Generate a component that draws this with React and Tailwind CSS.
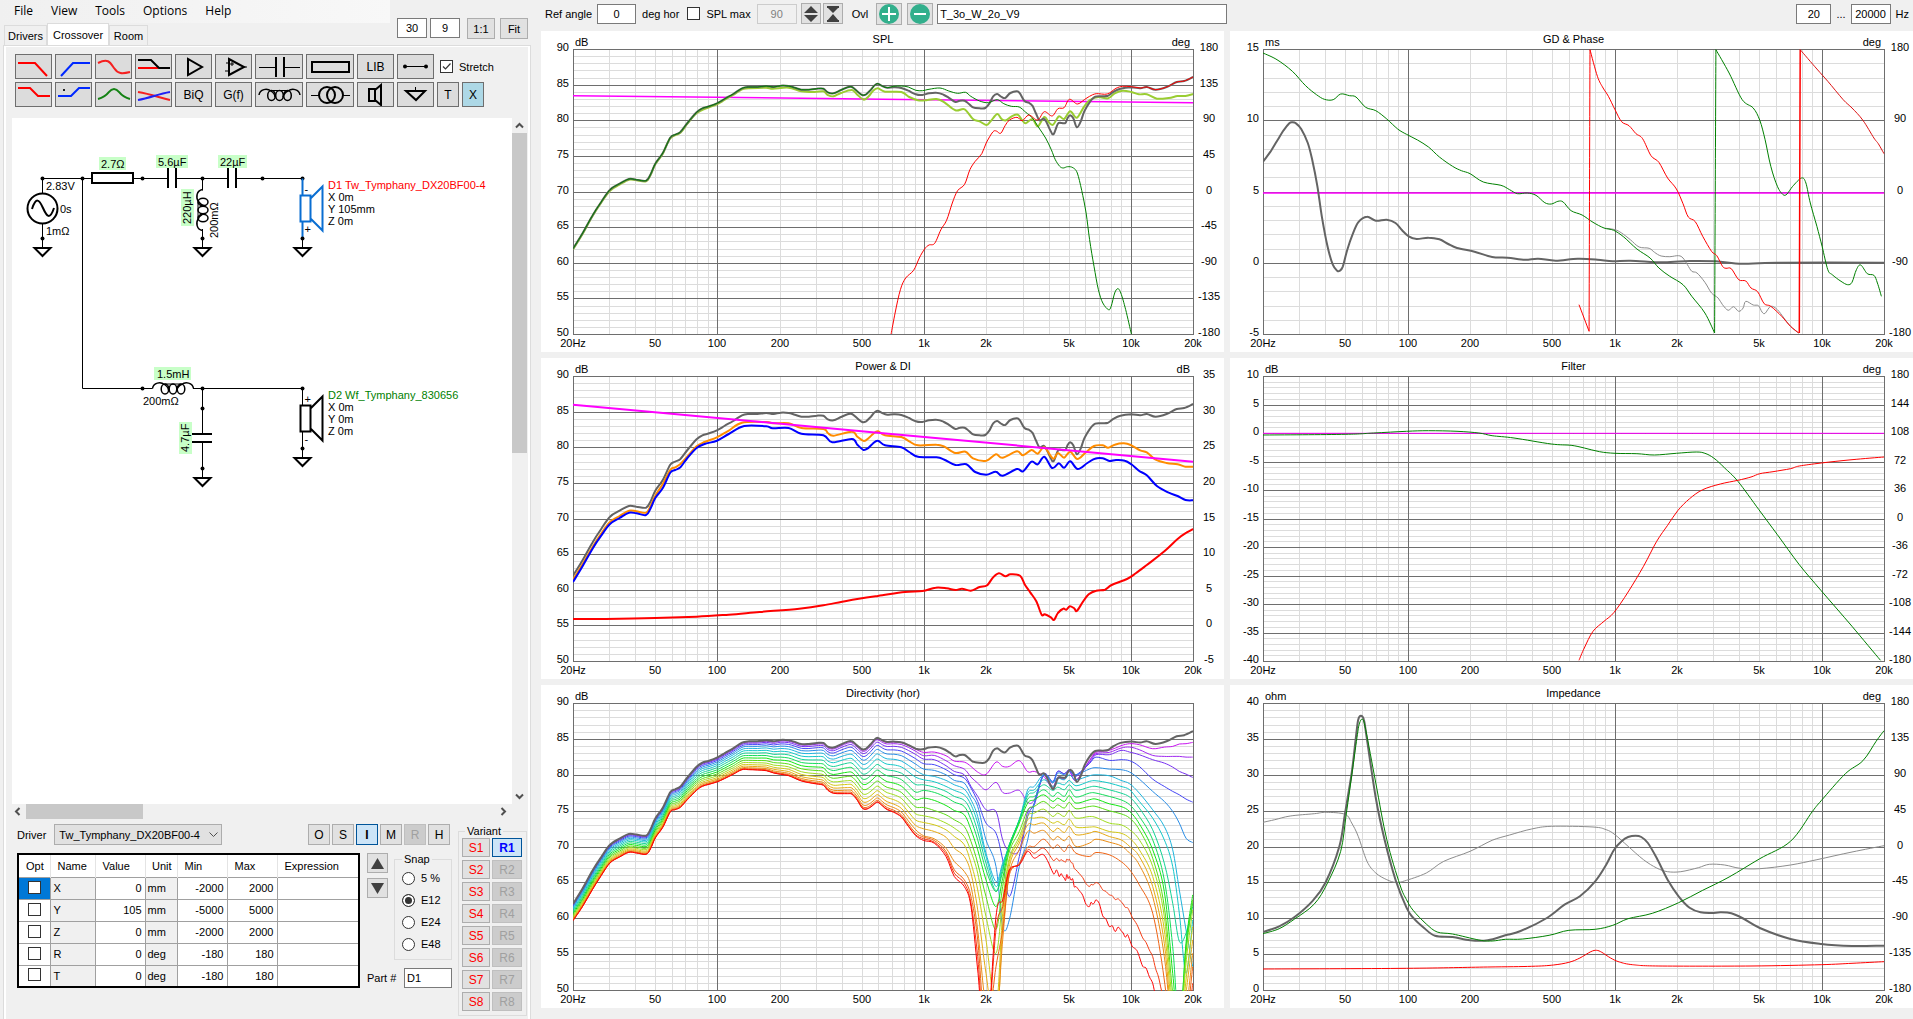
import React, { useState } from "react";
import clsx from "clsx";

const FREQ_LABELS = [
  [20, "20Hz"],
  [50, "50"],
  [100, "100"],
  [200, "200"],
  [500, "500"],
  [1000, "1k"],
  [2000, "2k"],
  [5000, "5k"],
  [10000, "10k"],
  [20000, "20k"],
];

const FREQ_LINES = [20, 100, 1000, 10000].flatMap((f) =>
  f === 20 ? [30, 40, 50, 60, 70, 80, 90] : [1, 2, 3, 4, 5, 6, 7, 8, 9].map((n) => n * f)
).filter((f) => f < 20000);

// each measurement set has its own raw coordinate box: [x, y, width, height]
const SPL_BOX = [76, 148, 1409, 855];
const POWER_BOX = [76, 64, 1409, 855];
const DIR_LOW_BOX = [76, 70, 1409, 861];
const DIR_HIGH_BOX = [-1039, -110, 1860, 860];
const GD_BOX = [88, 148, 1415, 855];
const FILTER_BOX = [88, 64, 1415, 855];
const IMP_BOX = [88, 70, 1415, 861];

const parse = (s) => s.trim().split(/\s+/).map((p) => p.split(",").map(Number));

const norm = (points, [bx, by, bw, bh]) => points.map(([x, y]) => [(x - bx) / bw, (y - by) / bh]);

const SUM_LOW = "76,747 98,700 120,648 140,607 160,570 182,552 203,538 220,540 242,543 252,525 263,492 280,460 297,414 308,405 320,397 336,370 357,338 370,326 385,320 403,311 420,298 440,283 460,266 475,262 495,262 515,259 532,262 548,258 566,259 580,264 595,270 612,270 630,267 645,267 655,278 668,281 685,271 700,263 710,262 722,275 733,286 742,284 753,270 762,256 769,252 780,260 790,264";
const SUM_MID = "805,263 822,265 838,273 855,284";
const SUM_HIGH = "870,286 885,281 902,279 918,285 932,296 945,307 955,303 966,303 976,313 985,323 1000,326 1013,325 1022,312 1031,290 1040,283 1049,291 1058,295 1070,280 1085,275 1092,282 1102,304 1112,309 1120,318 1128,341 1136,362 1146,357 1153,370 1160,390 1168,404 1178,372 1186,370 1195,370 1200,355 1206,347 1213,356 1221,383 1230,365 1238,335 1250,308 1263,291 1280,290 1292,288 1305,276 1320,267 1345,263 1365,266 1380,262 1400,270 1425,262 1448,247 1465,244 1485,232";
const SUM = norm(parse(`${SUM_LOW} ${SUM_MID} ${SUM_HIGH}`), SPL_BOX);

const splTraces = [
  { color: "#ff00ff", width: 1.5, points: norm(parse("76,288 1485,309"), SPL_BOX) },
  {
    color: "#9acd32",
    width: 2,
    points: norm(parse("76,749 98,702 120,650 140,609 160,573 182,555 203,540 220,542 242,545 252,527 263,494 280,462 297,416 320,399 336,372 357,341 385,323 403,314 420,301 440,286 460,269 475,266 515,264 530,267 566,264 595,275 625,277 645,275 655,286 668,290 685,280 710,271 722,285 737,300 748,290 758,273 769,266 785,276 822,277 840,292 860,302 875,302 902,298 920,308 945,332 966,329 985,358 1000,365 1015,376 1025,365 1040,343 1050,358 1060,362 1073,350 1087,345 1097,362 1105,371 1120,358 1132,380 1147,352 1157,368 1167,375 1180,350 1192,358 1206,335 1221,354 1238,320 1252,300 1270,292 1292,296 1307,281 1325,273 1345,277 1362,284 1380,284 1403,297 1430,295 1450,289 1468,289 1485,283"), SPL_BOX),
  },
  { color: "#646464", width: 2, points: SUM },
  {
    color: "#008000",
    width: 1,
    points: norm(parse(`${SUM_LOW} 805,260 822,259 838,262 855,272 870,273 885,269 910,265 930,274 950,281 968,278 980,290 1000,304 1020,309 1040,300 1055,312 1072,320 1090,322 1105,338 1120,355 1135,385 1150,415 1163,450 1172,480 1182,500 1190,505 1200,501 1212,504 1222,520 1232,572 1242,640 1250,720 1260,800 1270,870 1280,910 1293,930 1299,920 1307,880 1314,867 1321,880 1332,930 1345,1003`), SPL_BOX),
  },
  {
    color: "#ff0000",
    width: 1,
    points: norm(parse("799,1003 808,940 820,870 832,835 850,812 863,775 875,748 885,736 898,731 912,690 925,662 938,610 950,573 966,554 978,510 990,485 1005,462 1015,430 1030,397 1038,394 1048,401 1058,378 1068,361 1085,353 1097,363 1112,346 1132,361 1147,336 1165,349 1178,327 1192,324 1204,299 1222,313 1238,300 1250,290 1265,282 1290,283 1310,266 1325,260 1345,261 1365,265 1380,262 1400,270 1425,262 1448,247 1465,244 1485,232"), SPL_BOX),
  },
];

const powerTraces = [
  { color: "#646464", width: 2, points: SUM },
  {
    color: "#ff8c00",
    width: 2,
    points: norm(parse("76,675 98,628 120,578 140,537 160,502 182,484 203,468 220,470 242,474 252,455 263,423 280,388 297,346 308,338 320,328 336,305 357,275 375,262 403,248 430,228 460,204 515,202 530,206 566,206 595,220 645,223 655,235 668,243 710,231 722,246 737,259 748,250 758,238 769,230 785,242 822,247 840,260 860,272 902,270 920,276 945,295 968,291 985,311 1015,318 1037,299 1052,309 1085,290 1099,302 1118,286 1132,297 1147,278 1167,312 1178,295 1192,309 1206,291 1222,313 1240,295 1260,274 1280,272 1292,279 1307,270 1328,266 1345,272 1365,287 1380,293 1400,315 1425,325 1450,329 1468,336 1485,336"), POWER_BOX),
  },
  {
    color: "#0000ff",
    width: 2,
    points: norm(parse("76,682 98,634 120,583 140,543 160,508 182,490 203,474 220,476 242,481 252,462 263,430 280,400 297,354 308,346 320,338 336,310 357,280 375,268 403,258 430,238 465,214 515,215 530,221 566,220 595,237 645,242 665,263 710,253 722,270 735,285 745,282 757,267 769,258 785,272 822,278 840,292 860,306 902,308 920,315 945,331 970,329 990,352 1015,360 1037,351 1052,363 1085,343 1099,350 1118,321 1132,329 1147,306 1165,340 1180,326 1192,339 1206,320 1223,343 1245,325 1262,312 1280,311 1295,319 1310,316 1330,318 1345,329 1362,348 1380,362 1403,394 1430,414 1450,424 1468,436 1485,437"), POWER_BOX),
  },
  {
    color: "#ff0000",
    width: 2,
    points: norm(parse("76,793 150,793 263,790 357,786 430,780 500,772 590,762 645,752 700,738 769,724 830,712 870,709 900,699 925,701 945,706 960,702 980,708 1000,697 1017,692 1030,669 1044,656 1059,665 1070,659 1092,663 1103,690 1115,713 1129,740 1141,780 1148,779 1162,788 1169,796 1178,775 1190,762 1197,765 1205,755 1215,761 1221,769 1235,741 1248,719 1265,708 1285,705 1300,691 1335,673 1355,656 1380,631 1420,590 1450,553 1470,534 1485,523"), POWER_BOX),
  },
  { color: "#ff00ff", width: 2, points: norm(parse("76,150 1485,321"), POWER_BOX) },
];

// rear response below 1 kHz, sampled at the same frequencies as the sum
const REAR_LOW = norm(parse("76,723 98,680 120,630 140,588 160,550 182,532 203,518 220,520 242,524 252,508 263,475 280,443 297,397 308,390 320,383 336,360 357,332 370,320 385,314 403,307 420,297 440,284 460,270 475,270 495,271 515,273 532,280 548,284 566,288 580,296 595,304 612,309 630,313 645,317 655,332 668,341 685,342 700,342 710,344 722,362 733,385 742,389 753,382 762,372 769,368 780,380 790,390 805,398 822,412 838,440 855,468"), DIR_LOW_BOX);

const DIR_X = [13, 45, 80, 105, 135, 155, 175, 200, 230, 250, 270, 300, 325, 345, 373, 400, 415, 435, 450, 470, 510, 530, 570, 605, 631, 660, 700, 735, 760, 780, 800, 820];

// one row for every 10 degrees off axis
const DIRECTIVITY = [
  ["#c814f0", [38, 37, 48, 64, 67, 80, 97, 104, 67, 80, 80, 63, 96, 95, 110, 145, 115, 118, 95, 122, 63, 38, 32, 18, 12, 15, 27, 22, 20, 13, 12, 8]],
  ["#a028f0", [48, 47, 63, 78, 88, 112, 130, 150, 128, 158, 160, 152, 188, 180, 108, 140, 112, 115, 93, 122, 65, 42, 38, 25, 22, 30, 47, 50, 50, 50, 52, 52]],
  ["#7832f0", [58, 60, 78, 95, 105, 140, 170, 210, 215, 300, 335, 330, 215, 195, 105, 130, 95, 102, 90, 110, 70, 45, 45, 32, 37, 45, 60, 70, 82, 95, 103, 113]],
  ["#4646f5", [72, 75, 90, 105, 115, 145, 185, 250, 280, 360, 470, 350, 230, 190, 103, 125, 95, 102, 92, 105, 72, 52, 62, 60, 63, 80, 118, 140, 155, 165, 178, 187]],
  ["#288ce6", [88, 92, 105, 122, 130, 165, 200, 300, 380, 560, 540, 380, 300, 190, 105, 128, 100, 105, 95, 105, 88, 84, 88, 90, 97, 118, 155, 185, 215, 250, 295, 308]],
  ["#1eb4dc", [105, 110, 122, 135, 148, 180, 230, 340, 425, 370, 320, 240, 150, 140, 105, 128, 115, 120, 105, 120, 108, 105, 108, 122, 132, 160, 210, 260, 330, 450, 570, 680]],
  ["#14c8c8", [120, 126, 140, 152, 165, 195, 250, 350, 440, 375, 315, 240, 160, 150, 120, 140, 130, 135, 122, 138, 125, 123, 130, 140, 150, 185, 235, 300, 380, 520, 700, 540]],
  ["#14d296", [135, 142, 155, 170, 182, 215, 275, 370, 452, 385, 315, 240, 168, 158, 135, 152, 142, 150, 135, 152, 142, 140, 150, 160, 172, 205, 270, 370, 490, 604, 580, 500]],
  ["#14dc5a", [152, 158, 172, 187, 200, 240, 300, 390, 455, 395, 315, 243, 178, 170, 150, 170, 158, 170, 150, 172, 160, 160, 170, 180, 195, 230, 300, 420, 620, 860, 620, 490]],
  ["#14e614", [175, 182, 197, 212, 225, 270, 330, 420, 500, 415, 325, 250, 190, 180, 165, 185, 175, 185, 168, 190, 180, 178, 192, 200, 215, 252, 330, 455, 700, 880, 610, 465]],
  ["#5adc14", [203, 212, 225, 240, 260, 305, 370, 470, 568, 440, 335, 275, 210, 200, 185, 205, 195, 205, 188, 207, 200, 200, 213, 222, 235, 270, 355, 500, 760, 890, 640, 480]],
  ["#a0dc1e", [228, 235, 250, 265, 290, 335, 400, 530, 640, 480, 355, 290, 228, 220, 208, 230, 220, 230, 212, 235, 230, 233, 250, 255, 270, 300, 380, 530, 800, 900, 670, 510]],
  ["#d2c814", [248, 255, 270, 290, 315, 370, 450, 600, 800, 520, 365, 300, 240, 235, 233, 250, 245, 255, 238, 262, 262, 262, 275, 280, 295, 330, 410, 570, 840, 910, 720, 560]],
  ["#e6aa14", [267, 275, 292, 325, 350, 400, 510, 700, 880, 560, 380, 310, 255, 255, 250, 275, 265, 278, 260, 285, 280, 275, 290, 300, 320, 350, 440, 610, 880, 920, 760, 600]],
  ["#eb8c14", [288, 297, 325, 365, 395, 440, 570, 800, 850, 600, 400, 330, 275, 280, 272, 300, 290, 303, 290, 320, 310, 298, 307, 318, 340, 375, 470, 650, 900, 940, 820, 640]],
  ["#f06414", [292, 302, 335, 390, 420, 470, 600, 880, 680, 570, 405, 370, 322, 320, 298, 325, 315, 335, 315, 340, 350, 338, 345, 365, 390, 435, 520, 720, 960, 960, 860, 680]],
  ["#f53c14", [297, 307, 342, 400, 430, 490, 650, 920, 570, 500, 395, 373, 330, 340, 325, 360, 358, 365, 358, 390, 440, 428, 465, 485, 515, 570, 650, 780, 960, 980, 900, 730]],
  ["#ff0000", [302, 310, 350, 410, 440, 500, 690, 920, 530, 480, 390, 375, 335, 355, 345, 397, 397, 415, 410, 440, 500, 480, 560, 572, 600, 650, 730, 850, 960, 980, 960, 800]],
];

const directivityTraces = [
  ...DIRECTIVITY.map(([color, ys], i) => {
    const angle = ((i + 1) * Math.PI) / 18;
    const low = REAR_LOW.map(([x, y], n) => {
      const k = (1 - Math.cos(angle)) / 2;
      const top = SUM[n][1];
      return [x, top + (y - top) * k];
    });
    const high = [];
    DIR_X.forEach((x, n) => {
      high.push([x, ys[n]]);
      // measurement noise behind the cabinet
      if (i > 15 && n > 14 && n < 28) {
        const step = (DIR_X[n + 1] - x) / 4;
        for (let s = 1; s < 4; s++) {
          const base = ys[n] + ((ys[n + 1] - ys[n]) * s) / 4;
          high.push([x + step * s, base + Math.sin(n * 7 + s * 2.4) * (i === 17 ? 9 : 4)]);
        }
      }
    });
    return { color, width: 1, points: [...low, ...norm(high, DIR_HIGH_BOX)] };
  }),
  { color: "#646464", width: 2, points: SUM },
];

const gdTraces = [
  { color: "#ff00ff", width: 1.5, points: norm(parse("88,580 1503,580"), GD_BOX) },
  {
    color: "#8c8c8c",
    width: 1,
    points: norm(parse("870,686 890,690 905,700 925,720 945,742 968,746 980,758 995,769 1015,771 1035,768 1045,775 1055,795 1065,815 1077,820 1095,848 1110,880 1125,895 1135,915 1148,932 1160,921 1172,935 1182,925 1188,905 1205,916 1217,918 1225,937 1232,941 1245,920 1260,930 1275,955 1290,980 1308,1000"), GD_BOX),
  },
  {
    color: "#646464",
    width: 2,
    points: norm(parse("88,486 105,456 120,424 135,392 148,371 155,368 163,371 175,388 190,430 200,480 212,560 222,650 235,740 247,795 257,813 263,813 270,800 280,750 292,705 305,668 325,651 345,663 370,660 390,670 405,692 420,710 438,718 465,714 490,719 510,733 530,745 570,756 610,772 645,774 685,780 715,777 755,783 805,777 850,780 885,785 925,783 1000,788 1060,784 1120,785 1180,792 1260,789 1503,789"), GD_BOX),
  },
  {
    color: "#008000",
    width: 1,
    points: norm(parse("88,160 120,180 155,215 185,258 210,285 228,299 248,300 265,283 285,288 300,292 322,323 345,333 370,358 395,388 415,404 440,421 465,442 490,472 520,500 540,513 560,522 590,547 630,557 650,570 668,582 690,580 710,587 730,609 745,613 760,605 772,607 790,633 815,646 840,668 865,685 887,692 910,712 940,748 970,775 990,805 1015,830 1045,855 1065,890 1095,940 1117,1000"), GD_BOX),
  },
  { color: "#008000", width: 1, points: norm(parse("1117,1000 1120,150"), GD_BOX) },
  {
    color: "#008000",
    width: 1,
    points: norm(parse("1120,150 1150,220 1180,300 1205,325 1220,362 1232,420 1245,500 1260,560 1273,585 1282,583 1295,560 1315,535 1325,550 1335,610 1350,680 1362,740 1375,810 1385,825 1405,845 1420,855 1430,848 1440,810 1450,796 1465,822 1480,827 1488,850 1497,890"), GD_BOX),
  },
  { color: "#ff0000", width: 1, points: norm(parse("808,915 831,995"), GD_BOX) },
  { color: "#ff0000", width: 1, points: norm(parse("831,995 833,150"), GD_BOX) },
  {
    color: "#ff0000",
    width: 1,
    points: norm(parse("833,150 850,230 863,265 875,290 890,330 905,366 922,378 938,402 953,417 972,468 990,488 1010,535 1030,568 1045,612 1057,652 1073,666 1090,710 1110,755 1122,768 1135,800 1143,806 1155,807 1172,840 1188,844 1200,865 1215,876 1230,912 1245,920 1270,950 1290,980 1309,1000"), GD_BOX),
  },
  { color: "#ff0000", width: 1.5, points: norm(parse("1310,1000 1312,150"), GD_BOX) },
  {
    color: "#dc1414",
    width: 1,
    points: norm(parse("1312,150 1350,208 1375,245 1410,300 1430,325 1455,362 1480,415 1490,432 1503,462"), GD_BOX),
  },
];

const filterTraces = [
  { color: "#ff00ff", width: 1, points: norm(parse("88,236 1503,236"), FILTER_BOX) },
  {
    color: "#008000",
    width: 1,
    points: norm(parse("88,241 275,239 340,235 415,230 465,228 530,230 580,235 610,243 660,250 745,268 790,272 820,280 855,291 890,296 940,297 980,301 1030,296 1075,292 1095,296 1115,310 1140,340 1170,380 1218,465 1260,540 1310,630 1360,708 1430,815 1495,917"), FILTER_BOX),
  },
  {
    color: "#ff0000",
    width: 1,
    points: norm(parse("808,917 820,880 840,830 865,800 888,773 920,712 955,635 985,560 1010,512 1033,468 1060,432 1090,405 1130,388 1170,377 1200,367 1220,357 1250,351 1290,342 1310,334 1360,325 1430,315 1503,307"), FILTER_BOX),
  },
];

const impedanceTraces = [
  {
    color: "#8c8c8c",
    width: 1,
    points: norm(parse("88,428 115,420 150,409 205,402 232,398 275,404 290,430 305,470 325,545 345,580 370,600 390,608 410,604 460,580 500,545 560,515 610,482 650,466 700,448 745,440 840,442 870,450 890,465 920,500 955,540 985,565 1010,576 1040,576 1080,564 1105,554 1140,556 1175,566 1220,567 1290,556 1350,540 1430,517 1503,498"), IMP_BOX),
  },
  {
    color: "#646464",
    width: 2,
    points: norm(parse("88,757 125,740 160,712 200,665 230,610 262,500 275,400 290,280 300,170 305,120 311,108 318,120 325,180 345,355 365,480 390,600 415,684 430,714 455,745 480,768 520,772 560,782 600,782 640,767 675,754 735,715 775,675 810,650 845,605 870,555 888,510 905,485 920,472 937,468 950,472 965,490 985,535 1010,600 1035,650 1060,684 1085,698 1110,700 1130,698 1155,701 1180,715 1220,745 1290,778 1360,793 1430,799 1503,798"), IMP_BOX),
  },
  {
    color: "#008000",
    width: 1,
    points: norm(parse("88,762 125,747 160,718 205,673 235,610 265,515 278,400 292,270 303,165 308,130 315,119 322,150 345,310 370,480 400,615 415,660 430,692 460,733 485,757 520,763 580,781 610,784 640,779 680,778 740,767 785,752 845,749 885,737 920,717 975,701 1035,669 1090,632 1150,592 1220,537 1290,485 1340,395 1360,363 1415,282 1455,243 1485,185 1503,153"), IMP_BOX),
  },
  {
    color: "#ff0000",
    width: 1,
    points: norm(parse("88,868 415,866 600,862 700,860 750,856 785,848 810,835 835,816 848,812 860,818 880,835 900,847 930,855 990,859 1200,859 1360,855 1430,851 1503,846"), IMP_BOX),
  },
];

// Catmull-Rom spline through all points
const toPath = (points, w, h) => {
  const p = points.map(([x, y]) => [x * w, y * h]);
  let d = `M${p[0][0].toFixed(1)} ${p[0][1].toFixed(1)}`;
  for (let i = 0; i < p.length - 1; i++) {
    const a = p[i - 1] || p[i];
    const b = p[i];
    const c = p[i + 1];
    const e = p[i + 2] || c;
    const n = [
      b[0] + (c[0] - a[0]) / 6,
      b[1] + (c[1] - a[1]) / 6,
      c[0] - (e[0] - b[0]) / 6,
      c[1] - (e[1] - b[1]) / 6,
      c[0],
      c[1],
    ].map((v) => v.toFixed(1));
    d += `C${n.join(" ")}`;
  }
  return d;
};

const Chart = ({ title, unit, rightUnit, max, min, rightLabels, traces, left = 32, width = 620, plotHeight = 285 }) => {
  const top = 18;
  const right = left + width;
  const bottom = top + plotHeight;
  const height = bottom + 18;
  const fx = (f) => Math.round(left + (Math.log10(f / 20) / 3) * width);
  const fy = (v) => Math.round(top + ((max - v) / (max - min)) * plotHeight);
  const rows = [];
  for (let v = min; v <= max; v++) rows.push(v);
  const majors = rows.filter((v) => v % 5 === 0);

  return (
    <figure className="bg-white">
      <svg viewBox={`0 0 683 ${height}`} className="block w-full h-auto text-[11px]" role="img" aria-label={title}>
        <g stroke="#dcdcdc" transform="translate(0.5 0.5)">
          {rows.map((v) => <line key={v} x1={left} x2={right} y1={fy(v)} y2={fy(v)} />)}
          {FREQ_LINES.map((f) => <line key={f} x1={fx(f)} x2={fx(f)} y1={top} y2={bottom} />)}
        </g>
        <g stroke="#6e6e6e" fill="none" transform="translate(0.5 0.5)">
          {majors.map((v) => <line key={v} x1={left} x2={right} y1={fy(v)} y2={fy(v)} />)}
          {[100, 1000, 10000].map((f) => <line key={f} x1={fx(f)} x2={fx(f)} y1={top} y2={bottom} />)}
          <rect x={left} y={top} width={width} height={plotHeight} />
        </g>
        <svg x={left} y={top} width={width + 1} height={plotHeight + 1} fill="none" strokeLinejoin="round">
          {traces.map((t, i) => (
            <path key={i} d={toPath(t.points, width, plotHeight)} stroke={t.color} strokeWidth={t.width} />
          ))}
        </svg>
        <g fill="#000">
          <text x={left + width / 2} y={top - 6} textAnchor="middle">{title}</text>
          <text x={left + 2} y={top - 3}>{unit}</text>
          {rightUnit && <text x={right - 3} y={top - 3} textAnchor="end">{rightUnit}</text>}
          {majors.map((v) => <text key={v} x={left - 4} y={fy(v) + 2} textAnchor="end">{v}</text>)}
          {rightLabels.map((v, i) => (
            <text key={v} x={right + 16} y={top + 2 + (i * plotHeight) / (rightLabels.length - 1)} textAnchor="middle">{v}</text>
          ))}
          {FREQ_LABELS.map(([f, label]) => <text key={f} x={fx(f)} y={bottom + 13} textAnchor="middle">{label}</text>)}
        </g>
      </svg>
    </figure>
  );
};

const range = (from, to, step) => {
  const out = [];
  for (let v = from; v >= to; v -= step) out.push(v);
  return out;
};

const ToolIcon = ({ w = 35, children }) => (
  <svg width={w} height="23" viewBox={`0 0 ${w} 23`} fill="none" stroke="#000" strokeWidth="2">{children}</svg>
);

const Coil = ({ transform }) => (
  <g transform={transform} fill="none" stroke="#000" strokeWidth="1.500">
    <path d="M0 0C1 -6 8 -7 12 -4C15 -2 16 0 16 2M24 2C25 -1 26 -3 29 -4C33 -7 40 -6 41 0" />
    <ellipse cx="12.500" cy="0.500" rx="3.800" ry="5" />
    <ellipse cx="20.500" cy="0.500" rx="3.800" ry="5" />
    <ellipse cx="28.500" cy="0.500" rx="3.800" ry="5" />
    <path d="M12 -4.500h17" strokeWidth="1" />
  </g>
);

const TOOLS_TOP = [
  { name: "Low pass", icon: <ToolIcon><path stroke="#f00" d="M2 8h17l12 13" /></ToolIcon> },
  { name: "High pass", icon: <ToolIcon><path stroke="#0028ff" d="M5 21l12 -13h17" /></ToolIcon> },
  { name: "All pass", icon: <ToolIcon><path stroke="#f52020" d="M2 8C12 3 14 7 18 13C22 19 26 19 34 17" /></ToolIcon> },
  { name: "Shelf cut", icon: <ToolIcon><path stroke="#f00" d="M2 13h20" /><path d="M2 5h13l8 8h11" /></ToolIcon> },
  { name: "Buffer", icon: <ToolIcon><path d="M12 4v16l14 -8z" /></ToolIcon> },
  { name: "Op-amp", icon: <ToolIcon><path d="M13 4v16l15 -8z" /><path strokeWidth="1" d="M10 8h3M9 16h4M28 12h3M16 7v4M14 9h4" /></ToolIcon> },
  { name: "Capacitor", wide: true, icon: <ToolIcon w={46}><path strokeWidth="1" d="M3 12.500h17M28 12.500h16" /><path strokeWidth="2" d="M20 2v20M28 2v20" /></ToolIcon> },
  { name: "Resistor", wide: true, icon: <ToolIcon w={46}><rect x="5" y="7" width="37" height="10" /></ToolIcon> },
  { name: "Library", label: "LIB" },
  { name: "Wire", icon: <ToolIcon><path strokeWidth="1" d="M7 11.500h21" /><circle cx="7" cy="11.500" r="1" /><circle cx="28" cy="11.500" r="1" /></ToolIcon> },
];

const TOOLS_BOTTOM = [
  { name: "Low shelf", icon: <ToolIcon><path stroke="#f00" d="M2 5h12l8 8h12" /></ToolIcon> },
  { name: "High shelf", icon: <ToolIcon><path stroke="#0028ff" d="M2 13h13l8 -8h11" /><path stroke="#222" d="M7 7h2" /></ToolIcon> },
  { name: "Peak", icon: <ToolIcon><path stroke="#148214" d="M2 16C14 13 12 6 18 6C24 6 22 13 34 16" /></ToolIcon> },
  { name: "Crossover", icon: <ToolIcon><path stroke="#f52020" d="M2 9C14 11 22 14 34 17" /><path stroke="#2020f5" d="M2 17C14 15 22 11 34 9" /></ToolIcon> },
  { name: "Biquad", label: "BiQ" },
  { name: "Transfer function", label: "G(f)" },
  { name: "Inductor", wide: true, icon: <ToolIcon w={46}><Coil transform="translate(3 12)" /></ToolIcon> },
  { name: "Transformer", wide: true, icon: <ToolIcon w={46}><circle cx="20" cy="12" r="8" /><circle cx="28" cy="12" r="8" /><path d="M4 12.500h8M36 12.500h7" strokeWidth="1" /></ToolIcon> },
  { name: "Driver", icon: <ToolIcon><path d="M11 6h6v12h-6zM17 7l6 -5v20l-6 -5" /></ToolIcon> },
  { name: "Ground", icon: <ToolIcon><path d="M8 8h19l-9 9z" /><path strokeWidth="1" d="M17.500 4v4" /></ToolIcon> },
  { name: "Text", label: "T", small: true },
  { name: "Delete", label: "X", small: true, active: true },
];

const ToolButton = ({ tool }) => (
  <button
    type="button"
    aria-label={tool.name}
    className={clsx(
      "flex h-[25px] items-center justify-center border border-[#6e6e6e] text-xs",
      tool.wide ? "w-12" : tool.small ? "w-[22px]" : "w-[37px]",
      tool.active ? "bg-[#add8e6]" : "bg-[#dcdcdc]"
    )}
  >
    {tool.icon || tool.label}
  </button>
);

const Node = ({ x, y }) => <circle cx={x} cy={y} r="2" fill="#000" />;

const Ground = ({ x, y }) => (
  <g fill="none" stroke="#000">
    <path d={`M${x} ${y - 9}v9`} />
    <path strokeWidth="2" d={`M${x - 8} ${y}h16l-8 8z`} />
  </g>
);

const Speaker = ({ x, y, color, width, top, bottom }) => (
  <g fill="none" stroke={color} strokeWidth={width}>
    <path d={`M${x} ${y}v17M${x} ${y + 43}v17`} />
    <path strokeWidth="2" d={`M${x - 2} ${y + 17}h10v26h-10zM${x + 8} ${y + 20}L${x + 20} ${y + 8}V${y + 52}L${x + 8} ${y + 40}`} />
    <g fill="#000" stroke="none">
      <text x={x + 2} y={y + 14}>{top}</text>
      <text x={x + 2} y={y + 54}>{bottom}</text>
    </g>
  </g>
);

const Schematic = () => (
  <svg width="500" height="686" viewBox="12 118 500 686" className="block text-[11px]" role="img" aria-label="Crossover schematic">
    <g fill="#c8ffc8">
      <rect x="99" y="157" width="27" height="13" />
      <rect x="156" y="155" width="32" height="13" />
      <rect x="218" y="155" width="29" height="13" />
      <rect x="181" y="189" width="13" height="37" />
      <rect x="154" y="367" width="37" height="13" />
      <rect x="179" y="422" width="13" height="32" />
    </g>
    <path
      fill="none"
      stroke="#000"
      d="M42.500 193v-14.500h49M133 178.500h35M176 178.500h52M236 178.500h66.500M42.500 224v15M82.500 178.500v210h70M193 388.500h109.500M202.500 178.500v12M202.500 229v10M202.500 388.500v46M202.500 442v27"
    />
    <g fill="none" stroke="#000" strokeWidth="2">
      <circle cx="42.500" cy="208.500" r="15" />
      <path d="M32 209C36 197 39 199 43 208S50 220 54 208" />
      <rect x="92" y="173" width="41" height="10" />
      <path d="M168 168v20M176 168v20M228 168v20M236 168v20M192 434h20M192 442h20" />
    </g>
    <Coil transform="translate(202.500 189.500) rotate(90) scale(1 -1)" />
    <Coil transform="translate(152.500 388.500)" />
    {[[42.5, 178.5], [82.5, 178.5], [142.5, 178.5], [202.5, 178.5], [262.5, 178.5], [302.5, 178.5], [42.5, 238.5], [202.5, 238.5], [142.5, 388.5], [202.5, 388.5], [302.5, 388.5], [202.5, 408.5], [202.5, 468.5]].map(([x, y]) => (
      <Node key={`${x}-${y}`} x={x} y={y} />
    ))}
    <Speaker x={302.5} y={178.5} color="#0a6ed2" width={2} top="-" bottom="+" />
    <Speaker x={302.5} y={388.5} color="#000" width={1} top="+" bottom="-" />
    <Node x={302.5} y={238.5} />
    <Node x={302.5} y={448.5} />
    <Ground x={42.5} y={248} />
    <Ground x={202.5} y={248} />
    <Ground x={302.5} y={248} />
    <Ground x={302.5} y={458} />
    <Ground x={202.5} y={478} />
    <text x="101" y="168">2.7Ω</text>
    <text x="158" y="166">5.6µF</text>
    <text x="220" y="166">22µF</text>
    <text x="46" y="190">2.83V</text>
    <text x="60" y="213">0s</text>
    <text x="46" y="235">1mΩ</text>
    <text transform="translate(191 224) rotate(-90)">220µH</text>
    <text transform="translate(218 238) rotate(-90)">200mΩ</text>
    <text x="157" y="378">1.5mH</text>
    <text x="143" y="405">200mΩ</text>
    <text transform="translate(189 452) rotate(-90)">4.7µF</text>
    <text x="328" y="189" fill="#f00">D1 Tw_Tymphany_DX20BF00-4</text>
    <text x="328" y="201">X 0m</text>
    <text x="328" y="213">Y 105mm</text>
    <text x="328" y="225">Z 0m</text>
    <text x="328" y="399" fill="#008000">D2 Wf_Tymphany_830656</text>
    <text x="328" y="411">X 0m</text>
    <text x="328" y="423">Y 0m</text>
    <text x="328" y="435">Z 0m</text>
  </svg>
);

const Chevron = ({ className }) => (
  <svg width="9" height="9" viewBox="0 0 9 9" className={className} fill="none" stroke="#505050" strokeWidth="2">
    <path d="M1 6.500l3.500 -3.500l3.500 3.500" />
  </svg>
);

const TickBox = (props) => (
  <span className="relative inline-flex size-[13px] shrink-0">
    <input type="checkbox" className="peer size-[13px] appearance-none border border-[#333] bg-white" {...props} />
    <svg viewBox="0 0 13 13" className="pointer-events-none absolute inset-0 hidden peer-checked:block" fill="none" stroke="#333" strokeWidth="1.200">
      <path d="M3 6.500l2.500 2.500l5 -5.500" />
    </svg>
  </span>
);

const ROWS = [
  ["X", 0, "mm", -2000, 2000],
  ["Y", 105, "mm", -5000, 5000],
  ["Z", 0, "mm", -2000, 2000],
  ["R", 0, "deg", -180, 180],
  ["T", 0, "deg", -180, 180],
];

const ParamTable = () => (
  <table className="w-[343px] table-fixed border-collapse border-2 border-black bg-white">
    <colgroup>
      <col className="w-8" />
      <col className="w-[45px]" />
      <col className="w-[50px]" />
      <col className="w-8" />
      <col className="w-[50px]" />
      <col className="w-[50px]" />
      <col />
    </colgroup>
    <thead>
      <tr className="h-[23px] text-left">
        {["Opt", "Name", "Value", "Unit", "Min", "Max", "Expression"].map((h) => (
          <th key={h} className={clsx("border-x border-[#e4e4e4] font-normal", h === "Unit" ? "px-0 text-right pr-[5px]" : "px-[7px]")}>{h}</th>
        ))}
      </tr>
    </thead>
    <tbody>
      {ROWS.map(([name, value, unit, min, max], i) => (
        <tr key={name} className="h-[22px]">
          <td className={clsx("border border-[#a0a0a0] text-center leading-none", i === 0 && "bg-[#0078d7]")}>
            <TickBox aria-label={`Optimize ${name}`} />
          </td>
          <td className="border border-[#a0a0a0] bg-[#f0f0f0] px-[3px]">{name}</td>
          <td className="border border-[#a0a0a0] px-[3px] text-right">{value}</td>
          <td className="border border-[#a0a0a0] bg-[#f0f0f0] px-[2px]">{unit}</td>
          <td className="border border-[#a0a0a0] px-[3px] text-right">{min}</td>
          <td className="border border-[#a0a0a0] px-[3px] text-right">{max}</td>
          <td className="border border-[#a0a0a0]"></td>
        </tr>
      ))}
    </tbody>
  </table>
);

const ModeButtons = () => (
  <div className="flex gap-[2px]">
    {["O", "S", "I", "M", "R", "H"].map((m) => (
      <button
        key={m}
        type="button"
        disabled={m === "R"}
        className={clsx(
          "h-[21px] w-[22px] border text-xs",
          m === "I" && "border-[#005499] bg-[#cce4f7] font-bold",
          m === "R" && "border-[#bfbfbf] bg-[#cccccc] text-[#a0a0a0]",
          m !== "I" && m !== "R" && "border-[#adadad] bg-[#e1e1e1]"
        )}
      >
        {m}
      </button>
    ))}
  </div>
);

const SnapGroup = () => {
  const [snap, setSnap] = useState("E12");
  return (
    <fieldset className="h-[107px] w-[58px] border border-[#dcdcdc] px-[7px]">
      <legend className="px-[2px] leading-3">Snap</legend>
      <div className="flex flex-col gap-[9px] pt-[7px]">
        {["5 %", "E12", "E24", "E48"].map((s) => (
          <label key={s} className="flex items-center gap-[6px] leading-[13px] whitespace-nowrap">
            <input
              type="radio"
              name="snap"
              value={s}
              checked={snap === s}
              onChange={(e) => setSnap(e.target.value)}
              className="size-[13px] shrink-0 appearance-none rounded-full border border-[#333] bg-white checked:bg-[#333] checked:shadow-[inset_0_0_0_2px_white]"
            />
            {s}
          </label>
        ))}
      </div>
    </fieldset>
  );
};

const VariantGroup = () => (
  <fieldset className="h-[191px] w-[69px] border border-[#dcdcdc] px-[3px]">
    <legend className="ml-[3px] px-[2px] leading-3">Variant</legend>
    <div className="flex flex-col gap-[3px] pt-[1px]">
      {[1, 2, 3, 4, 5, 6, 7, 8].map((n) => (
        <div key={n} className="flex gap-[2px]">
          <button type="button" className="h-[19px] w-7 border border-[#adadad] bg-[#e1e1e1] text-xs text-[#f00]">{`S${n}`}</button>
          <button
            type="button"
            disabled={n > 1}
            className={clsx(
              "h-[19px] w-[30px] border text-xs",
              n === 1 ? "border-[#005499] bg-[#cce4f7] font-bold text-[#00f]" : "border-[#bfbfbf] bg-[#cccccc] text-[#a0a0a0]"
            )}
          >
            {`R${n}`}
          </button>
        </div>
      ))}
    </div>
  </fieldset>
);

const EditorPanel = () => (
  <div className="flex gap-[6px] pr-[1px] pl-[11px]">
    <div className="flex flex-1 flex-col gap-2 pt-[5px]">
      <div className="flex items-center justify-between">
        <label className="flex items-center gap-2">
          Driver
          <span className="relative">
            <select className="h-[21px] w-[168px] appearance-none border border-[#adadad] bg-[#e1e1e1] px-1">
              <option>Tw_Tymphany_DX20BF00-4</option>
              <option>Wf_Tymphany_830656</option>
            </select>
            <svg viewBox="0 0 9 9" className="pointer-events-none absolute top-[6px] right-1 size-[9px]" fill="none" stroke="#505050">
              <path d="M0.500 2.500l4 4l4 -4" />
            </svg>
          </span>
        </label>
        <div className="pr-[2px]">
          <ModeButtons />
        </div>
      </div>
      <div className="flex gap-[7px]">
        <ParamTable />
        <div className="flex flex-1 flex-col justify-between">
          <div className="flex justify-between">
            <div className="flex flex-col gap-[5px]">
              <button type="button" aria-label="Move up" className="flex h-5 w-[21px] items-center justify-center border border-[#adadad] bg-[#e1e1e1]">
                <svg width="13" height="11" viewBox="0 0 13 11"><path fill="#404040" d="M0 11h13l-6.500 -11z" /></svg>
              </button>
              <button type="button" aria-label="Move down" className="flex h-5 w-[21px] items-center justify-center border border-[#adadad] bg-[#e1e1e1]">
                <svg width="13" height="11" viewBox="0 0 13 11"><path fill="#404040" d="M0 0h13l-6.500 11z" /></svg>
              </button>
            </div>
            <SnapGroup />
          </div>
          <label className="flex items-center justify-between whitespace-nowrap">
            Part #
            <input defaultValue="D1" className="h-5 w-12 border border-[#7a7a7a] bg-white px-[2px]" />
          </label>
        </div>
      </div>
    </div>
    <div className="pt-[6px]">
      <VariantGroup />
    </div>
  </div>
);

const Sidebar = () => (
  <aside className="flex w-[541px] shrink-0 flex-col">
    <header className="flex h-[45px] items-start justify-between pr-[13px]">
      <div>
        <nav className="flex h-[23px] w-[390px] items-center bg-linear-to-r from-[#f0f0f0] to-[#f8f8f8] pl-[5px] font-['Open_Sans',sans-serif] text-xs">
          {["File", "View", "Tools", "Options", "Help"].map((m) => (
            <button key={m} type="button" className="px-[9px] pb-[2px]">{m}</button>
          ))}
        </nav>
        <div className="flex h-[22px] items-end pl-1" role="tablist">
          <button type="button" role="tab" aria-selected="false" className="h-5 w-[43px] border border-b-0 border-[#dcdcdc]">Drivers</button>
          <button type="button" role="tab" aria-selected="true" className="h-[22px] w-[62px] border border-b-0 border-[#dcdcdc] bg-white">Crossover</button>
          <button type="button" role="tab" aria-selected="false" className="h-5 w-[39px] border border-b-0 border-[#dcdcdc]">Room</button>
        </div>
      </div>
      <div className="flex items-start gap-[3px] pt-[18px] text-center">
        <input aria-label="Columns" defaultValue="30" className="h-5 w-[30px] border border-[#7a7a7a] bg-white text-center" />
        <input aria-label="Rows" defaultValue="9" className="h-5 w-[30px] border border-[#7a7a7a] bg-white text-center" />
        <button type="button" className="ml-1 h-[21px] w-7 border border-[#adadad] bg-[#e1e1e1]">1:1</button>
        <button type="button" className="ml-[2px] h-[21px] w-7 border border-[#adadad] bg-[#e1e1e1]">Fit</button>
      </div>
    </header>

    <div className="ml-[3px] flex w-[528px] flex-1 flex-col border border-b-0 border-[#dcdcdc] bg-white px-[2px] pt-[1px]">
      <div className="flex flex-1 flex-col bg-[#f0f0f0]">
        <div className="flex flex-col gap-[3px] pt-[7px] pb-[11px] pl-[9px]">
          <div className="flex gap-[3px]">
            {TOOLS_TOP.map((t) => <ToolButton key={t.name} tool={t} />)}
            <label className="ml-[3px] flex items-center gap-[6px]">
              <TickBox defaultChecked />
              Stretch
            </label>
          </div>
          <div className="flex gap-[3px]">
            {TOOLS_BOTTOM.map((t) => <ToolButton key={t.name} tool={t} />)}
          </div>
        </div>

        <div className="flex flex-1 pr-[1px] pl-[6px]">
          <div className="flex-1 bg-white">
            <Schematic />
          </div>
          <div className="flex w-[15px] flex-col items-center">
            <div className="flex h-[15px] items-center"><Chevron /></div>
            <div className="h-[320px] w-full bg-[#c8c8c8]"></div>
            <div className="mt-auto flex h-[15px] items-center"><Chevron className="rotate-180" /></div>
          </div>
        </div>
        <div className="flex h-[15px] items-center pr-[20px] pl-[5px]">
          <Chevron className="mx-[2px] -rotate-90" />
          <div className="ml-[2px] h-full w-[117px] bg-[#c8c8c8]"></div>
          <Chevron className="ml-auto rotate-90" />
        </div>

        <div className="pb-[3px]">
          <EditorPanel />
        </div>
      </div>
    </div>
  </aside>
);

const TopBar = () => (
  <header className="flex h-[31px] items-center pr-1 pb-1 pl-1 whitespace-nowrap">
    <label className="flex items-center gap-[5px]">
      Ref angle
      <input defaultValue="0" className="h-5 w-[39px] border border-[#7a7a7a] bg-white text-center" />
    </label>
    <span className="ml-[6px]">deg hor</span>
    <label className="ml-2 flex items-center gap-[6px]">
      <TickBox />
      SPL max
    </label>
    <input aria-label="SPL max value" disabled defaultValue="90" className="ml-[6px] h-5 w-10 border border-[#cccccc] bg-[#f0f0f0] text-center text-[#808080]" />
    <button type="button" aria-label="Step" className="ml-1 flex h-[21px] w-5 items-center justify-center border border-[#adadad] bg-[#e1e1e1]">
      <svg width="14" height="16" viewBox="0 0 14 16" fill="#404040"><path d="M0 7h14l-7 -7zM0 9h14l-7 7z" /></svg>
    </button>
    <button type="button" aria-label="Fit range" className="ml-[2px] flex h-[21px] w-5 items-center justify-center border border-[#adadad] bg-[#e1e1e1]">
      <svg width="14" height="16" viewBox="0 0 14 16" fill="#404040"><path d="M1 1h12l-6 6zM1 15h12l-6 -7z" /><path d="M1 0h12v2h-12zM1 14h12v2h-12z" /></svg>
    </button>
    <span className="ml-[9px]">Ovl</span>
    <button type="button" aria-label="Add overlay" className="ml-2 flex h-[22px] w-[26px] items-center justify-center border border-[#adadad] bg-[#e1e1e1]">
      <svg width="20" height="20" viewBox="0 0 20 20"><circle cx="10" cy="10" r="10" fill="#32af8c" /><path stroke="#fff" strokeWidth="2" d="M3 10h14M10 3v14" /></svg>
    </button>
    <button type="button" aria-label="Remove overlay" className="ml-[5px] flex h-[22px] w-[26px] items-center justify-center border border-[#adadad] bg-[#e1e1e1]">
      <svg width="20" height="20" viewBox="0 0 20 20"><circle cx="10" cy="10" r="10" fill="#32af8c" /><path stroke="#fff" strokeWidth="2" d="M4 10h12" /></svg>
    </button>
    <input aria-label="Project name" defaultValue="T_3o_W_2o_V9" className="ml-1 h-5 w-[290px] border border-[#7a7a7a] bg-white px-[2px]" />
    <div className="ml-auto flex items-center">
      <input aria-label="Lowest frequency" defaultValue="20" className="h-5 w-[35px] border border-[#7a7a7a] bg-white text-center" />
      <span className="mx-[5px]">...</span>
      <input aria-label="Highest frequency" defaultValue="20000" className="h-5 w-10 border border-[#7a7a7a] bg-white text-center" />
      <span className="ml-[5px]">Hz</span>
    </div>
  </header>
);

const App = () => {
  const degrees = range(180, -180, 45);

  return (
    <div className="flex min-h-screen w-full bg-[#f0f0f0] font-['Liberation_Sans',Arial,sans-serif] text-[11px] leading-4 text-black">
      <Sidebar />
      <main className="min-w-0 flex-1">
        <TopBar />
        <div className="grid grid-cols-2 gap-[6px]">
          <Chart title="SPL" unit="dB" rightUnit="deg" max={90} min={50} rightLabels={degrees} traces={splTraces} />
          <Chart title="GD & Phase" unit="ms" rightUnit="deg" max={15} min={-5} rightLabels={range(180, -180, 90)} traces={gdTraces} left={33} width={621} />
          <Chart title="Power & DI" unit="dB" rightUnit="dB" max={90} min={50} rightLabels={range(35, -5, 5)} traces={powerTraces} />
          <Chart title="Filter" unit="dB" rightUnit="deg" max={10} min={-40} rightLabels={range(180, -180, 36)} traces={filterTraces} left={33} width={621} />
          <Chart title="Directivity (hor)" unit="dB" max={90} min={50} rightLabels={[]} traces={directivityTraces} plotHeight={287} />
          <Chart title="Impedance" unit="ohm" rightUnit="deg" max={40} min={0} rightLabels={degrees} traces={impedanceTraces} left={33} width={621} plotHeight={287} />
        </div>
      </main>
    </div>
  );
};

export default App;
